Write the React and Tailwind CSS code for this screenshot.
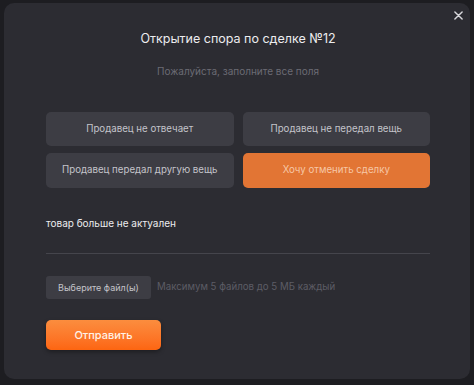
export default function App() {
  const font = { fontFamily: "Inter, 'Noto Sans', sans-serif" };
  return (
    <div className="h-[385px] w-[474px] bg-[#1d1d21] pt-[3px] px-[4px] pb-[6px]" style={font}>
      <div className="relative flex h-full flex-col rounded-[10px] bg-[#2c2c32] pt-[26px] pl-[42px] pr-[40px]">
        <button className="absolute right-[5px] top-[5px] flex h-[14px] w-[14px] items-center justify-center text-[#d8d8dc]">
          <svg width="9" height="9" viewBox="0 0 10 10" fill="none" stroke="currentColor" strokeWidth="1.6" strokeLinecap="round">
            <path d="M1 1L9 9M9 1L1 9" />
          </svg>
        </button>
        <h1 className="text-center text-[12.5px] leading-[20px] font-normal text-[#ececef]">Открытие спора по сделке №12</h1>
        <p className="mt-[15px] text-center text-[10px] leading-[14px] text-[#6b6b74]">Пожалуйста, заполните все поля</p>
        <div className="mt-[34px] grid grid-cols-2 gap-x-[9px] gap-y-[7px]">
          <button className="h-[34px] rounded-[5px] bg-[#3d3d44] text-[9.7px] text-[#c4c4ca]">Продавец не отвечает</button>
          <button className="h-[34px] rounded-[5px] bg-[#3d3d44] text-[9.7px] text-[#c4c4ca]">Продавец не передал вещь</button>
          <button className="h-[35px] rounded-[5px] bg-[#3d3d44] text-[9.7px] text-[#c4c4ca]">Продавец передал другую вещь</button>
          <button className="h-[35px] rounded-[5px] bg-[#e27534] text-[9.7px] text-[#f6c7a6]">Хочу отменить сделку</button>
        </div>
        <div className="mt-[28px] h-[38px] border-b border-[#45454c] text-[10px] leading-[14px] text-[#ececef]">товар больше не актуален</div>
        <div className="mt-[22px] flex items-center gap-[6px]">
          <button className="h-[23px] w-[105px] rounded-[3px] bg-[#3d3d44] text-[9px] text-[#c4c4ca]">Выберите файл(ы)</button>
          <span className="text-[9.7px] text-[#5c5c65]">Максимум 5 файлов до 5 МБ каждый</span>
        </div>
        <button className="mt-[21px] h-[30px] w-[115px] rounded-[5px] bg-gradient-to-b from-[#fb8d3e] to-[#fd6510] text-[11px] font-medium text-[#fff1e6] shadow-[0_2px_4px_rgba(0,0,0,0.35)]">Отправить</button>
      </div>
    </div>
  );
}
